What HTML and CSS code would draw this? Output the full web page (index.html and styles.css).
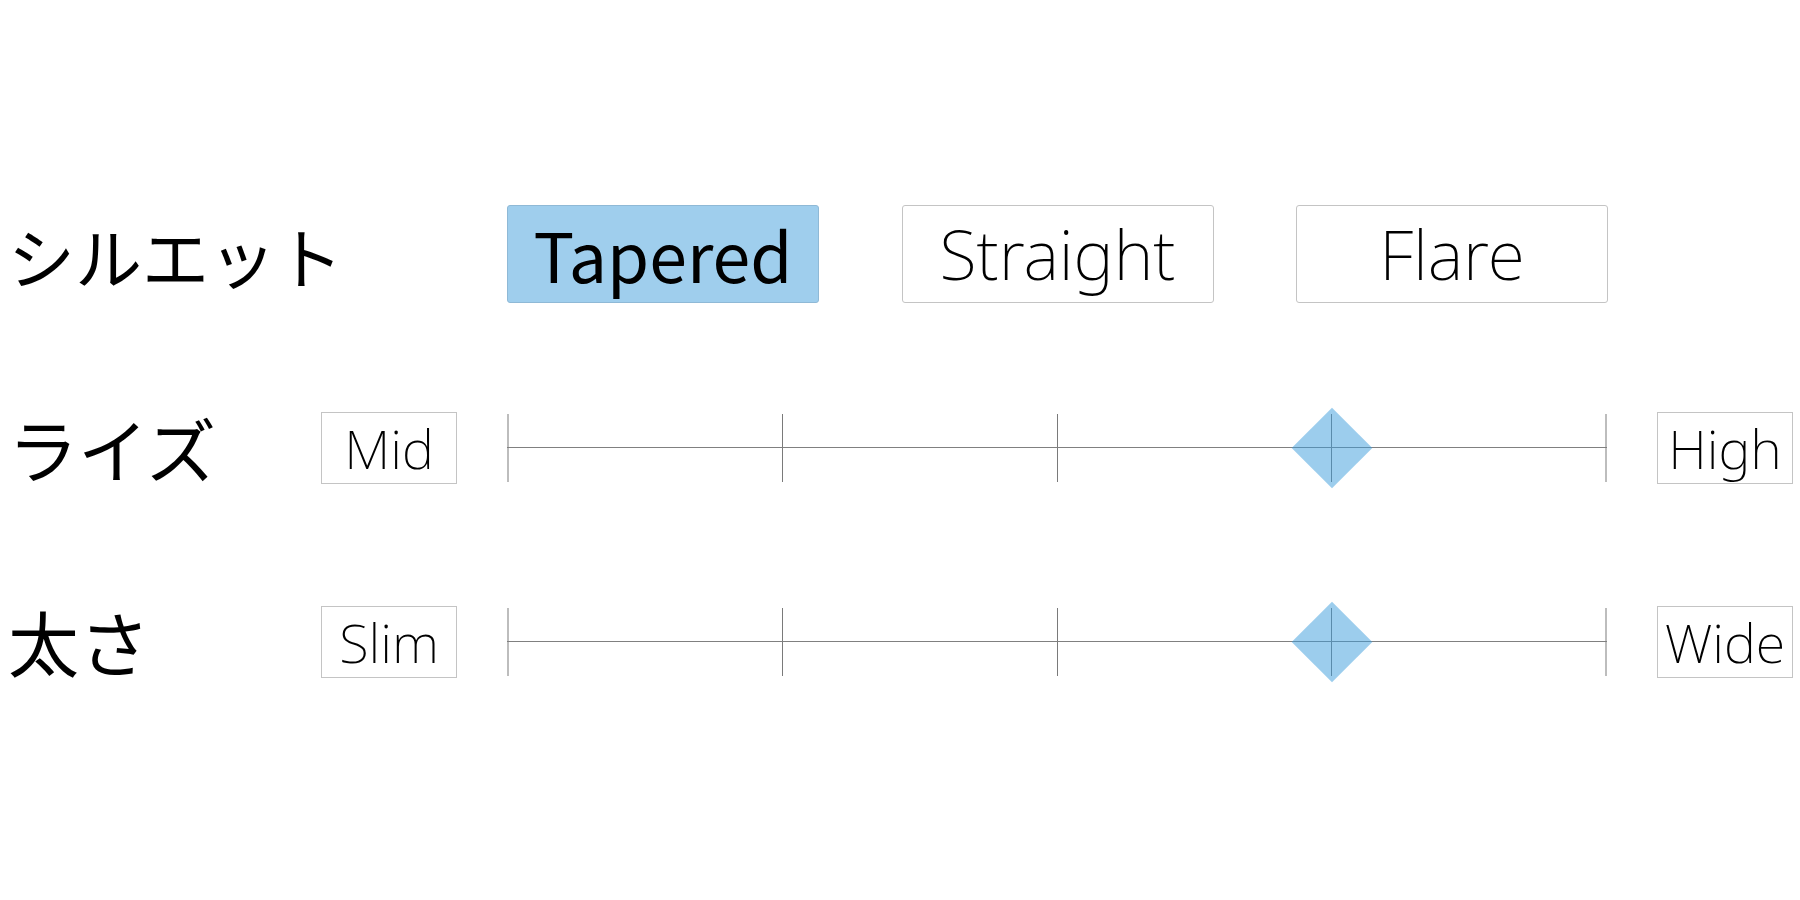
FILE: index.html
```html
<!DOCTYPE html>
<html lang="ja">
<head>
<meta charset="utf-8">
<title>Fit</title>
<link rel="stylesheet" href="styles.css">
</head>
<body>
<div class="panel">
  <div class="label label-silhouette">シルエット</div>
  <div class="options">
    <div class="opt selected">Tapered</div>
    <div class="opt">Straight</div>
    <div class="opt">Flare</div>
  </div>

  <div class="label label-rise">ライズ</div>
  <div class="end">Mid</div>
  <div class="track">
    <span class="tick edge"></span><span class="tick"></span><span class="tick"></span><span class="tick"></span><span class="tick edge"></span>
    <span class="thumb" style="left:75%"></span>
  </div>
  <div class="end">High</div>

  <div class="label label-width">太さ</div>
  <div class="end">Slim</div>
  <div class="track">
    <span class="tick edge"></span><span class="tick"></span><span class="tick"></span><span class="tick"></span><span class="tick edge"></span>
    <span class="thumb" style="left:75%"></span>
  </div>
  <div class="end">Wide</div>
</div>
</body>
</html>
```
FILE: styles.css
```css
html, body {
  margin: 0;
  padding: 0;
  background: #ffffff;
}
body {
  width: 1800px;
  height: 900px;
  font-family: "Noto Sans CJK JP", "Noto Sans", sans-serif;
  color: #000;
}
.panel {
  display: grid;
  grid-template-columns: 263px 136px 1100px 136px;
  grid-template-rows: 98px 98px 98px;
  column-gap: 50px;
  row-gap: 96px;
  padding: 205px 0 0 8px;
  align-items: center;
}
.label {
  grid-column: 1;
  font-size: 69px;
  line-height: 1;
  font-weight: 400;
  white-space: nowrap;
}
.label-silhouette { font-size: 67px; }
.label-rise { font-size: 70px; }
.label-width { font-size: 71px; margin-top: -4px; }
.options {
  grid-column: 3;
  width: 1101px;
  height: 98px;
  display: flex;
  justify-content: space-between;
}
.opt {
  box-sizing: border-box;
  width: 312px;
  height: 98px;
  border: 1px solid #c4c4c4;
  border-radius: 3px;
  background: #fff;
  display: flex;
  align-items: center;
  justify-content: center;
  font-family: "Noto Sans", "Noto Sans CJK JP", sans-serif;
  font-size: 68px;
  font-weight: 200;
  line-height: 1;
}
.opt.selected {
  background: #9fceed;
  border-color: #8fb9d6;
  font-family: "Noto Sans CJK JP", "Noto Sans", sans-serif;
  font-weight: 400;
}
.end {
  box-sizing: border-box;
  width: 136px;
  height: 72px;
  border: 1px solid #c4c4c4;
  background: #fff;
  display: flex;
  align-items: center;
  justify-content: center;
  font-family: "Noto Sans", "Noto Sans CJK JP", sans-serif;
  font-size: 54px;
  font-weight: 200;
  line-height: 1;
}
.track {
  position: relative;
  width: 1100px;
  height: 68px;
  display: flex;
  justify-content: space-between;
  align-items: stretch;
}
.track::before {
  content: "";
  position: absolute;
  left: 0;
  right: 0;
  top: 33px;
  height: 1px;
  background: #808080;
}
.tick {
  width: 1px;
  background: #7a7a7a;
}
.tick.edge {
  width: 2px;
  background: #bdbdbd;
}
.thumb {
  position: absolute;
  top: 34px;
  width: 57px;
  height: 57px;
  background: rgba(58, 156, 220, 0.5);
  transform: translate(-50%, -50%) rotate(45deg);
}
```
